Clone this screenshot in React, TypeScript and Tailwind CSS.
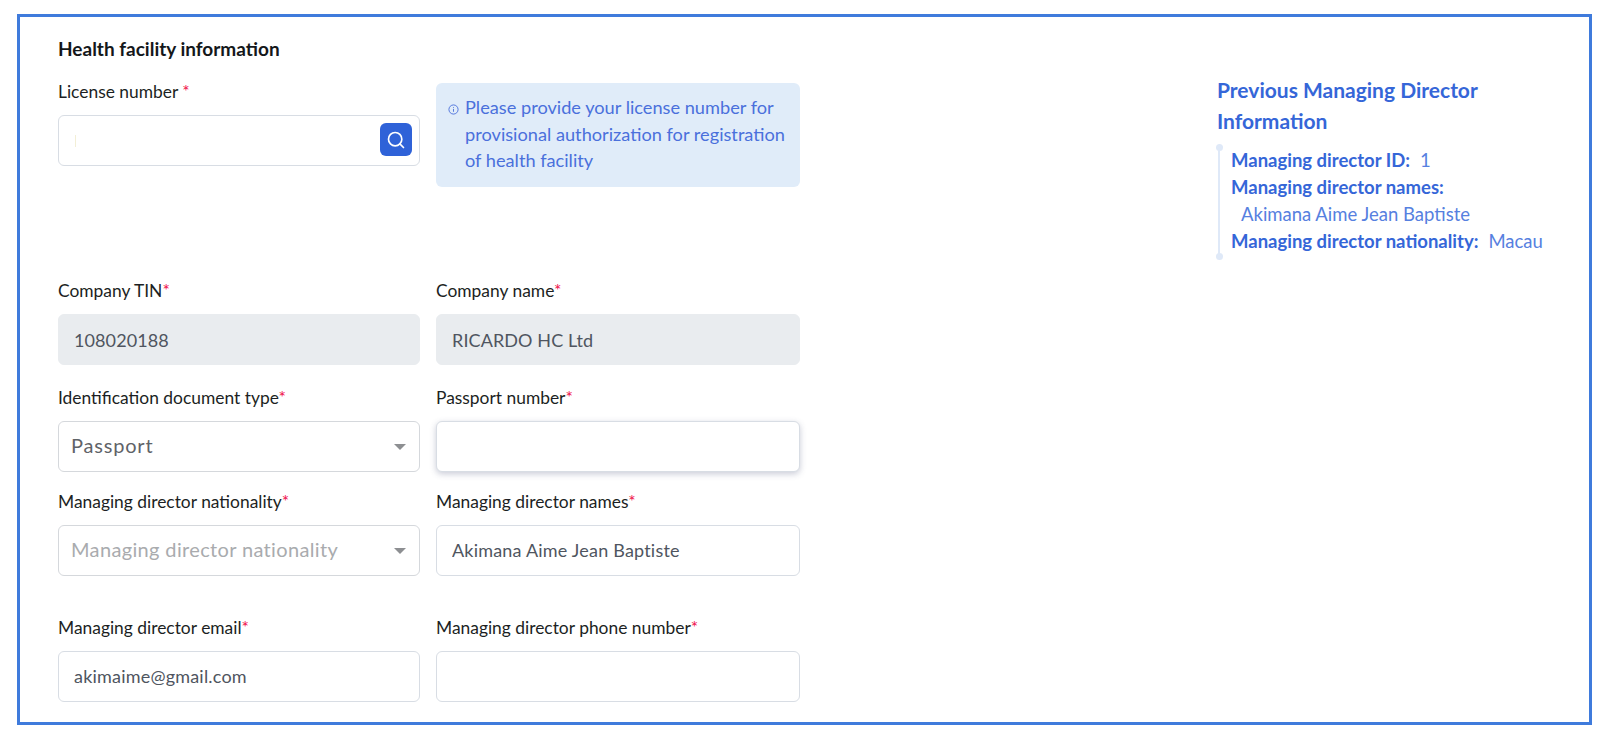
import React from 'react'
import { Search } from 'lucide-react'

const inputBase =
  "block w-full h-[51px] rounded-[6px] border border-[#d8dde4] bg-white px-[15px] pb-[2px] text-[18px] tracking-[0.2px] text-[#4f5560] outline-none"

function Label({ text, spaced }: { text: string; spaced?: boolean }) {
  return (
    <label className="block h-6 mb-3 text-[17.4px] leading-[26px] text-[#1c1f23]">
      {text}
      {spaced && ' '}
      <span className="text-[#f0134d]">*</span>
    </label>
  )
}

function TextField({ label, value, disabled, focused }: { label: string; value?: string; disabled?: boolean; focused?: boolean }) {
  return (
    <div>
      <Label text={label} />
      <input
        readOnly
        value={value ?? ''}
        className={
          disabled
            ? "block w-full h-[51px] rounded-[6px] border border-[#e9ecef] bg-[#e9ecef] px-[15px] text-[18px] tracking-[0.1px] text-[#4f5560] outline-none"
            : focused
              ? "block w-full h-[51px] rounded-[6px] border border-[#d8dde4] bg-white px-[15px] text-[18px] text-[#4f5560] outline-none shadow-[0_2px_6px_rgba(60,70,110,0.28)]"
              : inputBase
        }
      />
    </div>
  )
}

function SelectField({ label, value, placeholder }: { label: string; value: string; placeholder?: boolean }) {
  return (
    <div>
      <Label text={label} />
      <div className="flex h-[51px] items-center justify-between rounded-[6px] border border-[#d5d8dc] bg-white pl-3 pr-[13px]">
        <span className={placeholder ? "pb-[3px] text-[20px] tracking-[0.35px] text-[#a9abae]" : "pb-[3px] text-[20px] tracking-[0.8px] text-[#5f6368]"}>{value}</span>
        <svg width="12" height="6" viewBox="0 0 12 6" className="fill-[#8d8f92]">
          <path d="M0 0h12L6 6z" />
        </svg>
      </div>
    </div>
  )
}

export default function App() {
  return (
    <div className="h-[732px] w-[1600px] bg-white pt-[14px] pl-[17px] font-['Lato','Open_Sans',sans-serif]">
      <div className="flex h-[711px] w-[1575px] justify-between overflow-hidden border-[3px] border-[#3f7bdc] pl-[38px] pr-[32px] pt-[20px]">
        {/* formulaire */}
        <div className="w-[742px]">
          <h2 className="mb-[18px] h-6 text-[19px] font-bold leading-6 text-[#14171a]">Health facility information</h2>

          <div className="grid grid-cols-[362px_364px] gap-x-4">
            <div>
              <Label text="License number" spaced />
              <div className="relative">
                <input readOnly value="" className={inputBase} />
                <span className="absolute left-[17px] top-[20px] h-3 w-px bg-[#f3efd6]" />
                <button className="absolute right-2 top-2 flex h-[33px] w-8 items-center justify-center rounded-[6px] bg-[#2f62d8] text-white">
                  <Search size={20} strokeWidth={2} />
                </button>
              </div>
            </div>
            <div className="mt-1 flex h-[104px] items-start gap-[6px] rounded-[6px] bg-[#e0ecf9] pl-[12px] pr-2 pt-[11px] text-[18.2px] leading-[26.5px] text-[#4a70dc]">
              <svg width="11" height="11" viewBox="0 0 12 12" fill="none" stroke="currentColor" className="mt-[10px] shrink-0">
                <circle cx="6" cy="6" r="5" />
                <path d="M6 5.5v3M6 3.5v1" />
              </svg>
              <p>Please provide your license number for provisional authorization for registration of health facility</p>
            </div>
          </div>

          <div className="mt-[91px] grid grid-cols-[362px_364px] gap-x-4">
            <TextField label="Company TIN" value="108020188" disabled />
            <TextField label="Company name" value="RICARDO HC Ltd" disabled />
          </div>

          <div className="mt-5 grid grid-cols-[362px_364px] gap-x-4">
            <SelectField label="Identification document type" value="Passport" />
            <TextField label="Passport number" focused />
          </div>

          <div className="mt-[17px] grid grid-cols-[362px_364px] gap-x-4">
            <SelectField label="Managing director nationality" value="Managing director nationality" placeholder />
            <TextField label="Managing director names" value="Akimana Aime Jean Baptiste" />
          </div>

          <div className="mt-[39px] grid grid-cols-[362px_364px] gap-x-4">
            <TextField label="Managing director email" value="akimaime@gmail.com" />
            <TextField label="Managing director phone number" />
          </div>
        </div>

        {/* ancien directeur */}
        <div className="w-[340px] pt-[37px] text-[#3566d8]">
          <h3 className="text-[21px] font-bold leading-[31px]">
            Previous Managing Director
            <br />
            Information
          </h3>
          <div className="relative mt-[18px] ml-[1px] h-[110px] border-l-2 border-[#dfe9f8] pl-[11px] text-[18.5px] leading-[27px] whitespace-nowrap">
            <span className="absolute -left-[4px] -top-[3px] h-[7px] w-[7px] rounded-full bg-[#dfe9f8]" />
            <span className="absolute -bottom-[3px] -left-[4px] h-[7px] w-[7px] rounded-full bg-[#dfe9f8]" />
            <div className="-mt-[7px]">
              <b>Managing director ID:</b>
              <span className="ml-[10px] text-[#5680e0]">1</span>
            </div>
            <div>
              <b>Managing director names:</b>
            </div>
            <div className="pl-[10px] text-[#5680e0]">Akimana Aime Jean Baptiste</div>
            <div>
              <b>Managing director nationality:</b>
              <span className="ml-[10px] text-[#5680e0]">Macau</span>
            </div>
          </div>
        </div>
      </div>
    </div>
  )
}
